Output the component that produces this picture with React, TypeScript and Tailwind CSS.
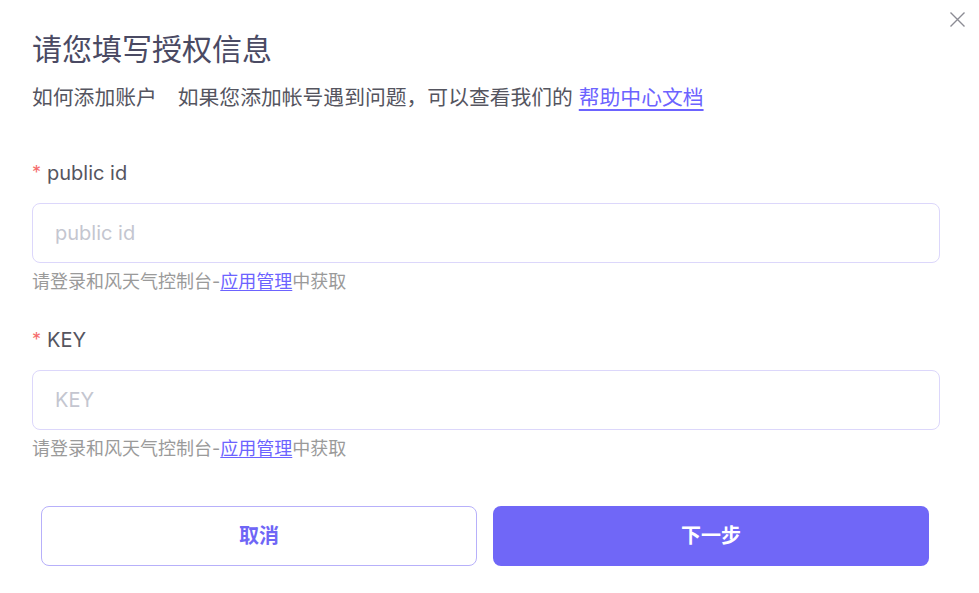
const font = { fontFamily: '"Inter", "Noto Sans CJK SC", sans-serif' };

function Field({ label, placeholder, mt }: { label: string; placeholder: string; mt: string }) {
  return (
    <div className={mt}>
      <div className="flex items-center h-[30px] text-[20px] leading-[30px] text-[#55555f]">
        <span className="text-[#f56c6c] mr-[6px] text-[18px]">*</span>
        {label}
      </div>
      <input
        placeholder={placeholder}
        className="mt-[15px] block w-full h-[60px] rounded-[8px] border border-[#dcd7fb] px-[22px] text-[20px] text-[#333] placeholder:text-[#c4c6d0] outline-none"
      />
      <p className="mt-[7px] text-[18px] leading-[24px] text-[#9a9a9a]">
        请登录和风天气控制台-
        <a href="#" className="text-[#6c63ff] underline underline-offset-2">
          应用管理
        </a>
        中获取
      </p>
    </div>
  );
}

export default function App() {
  return (
    <div className="relative w-[979px] h-[593px] bg-white" style={font}>
      {/* Close */}
      <button className="absolute left-[950px] top-[12px] text-[#8c8c94]">
        <svg width="15" height="15" viewBox="0 0 15 15" fill="none" stroke="currentColor" strokeWidth="1.4">
          <path d="M0.5 0.5L14.5 14.5M14.5 0.5L0.5 14.5" />
        </svg>
      </button>

      <div className="pl-[32px] pr-[39px] pt-[29px]">
        <h2 className="text-[30px] leading-[40px] text-[#4a4a63]">请您填写授权信息</h2>
        <p className="mt-[14px] text-[20.8px] leading-[30px] text-[#55555f]">
          如何添加账户<span className="inline-block w-[21px]" />如果您添加帐号遇到问题，可以查看我们的{" "}
          <a href="#" className="text-[#6c63ff] underline underline-offset-4">
            帮助中心文档
          </a>
        </p>

        <Field label="public id" placeholder="public id" mt="mt-[45px]" />
        <Field label="KEY" placeholder="KEY" mt="mt-[31px]" />

        <div className="mt-[45px] ml-[9px] w-[888px] grid grid-cols-2 gap-[16px]">
          <button className="h-[60px] rounded-[8px] border border-[#b7b0fa] bg-white text-[20px] font-bold text-[#6f66f6]">
            取消
          </button>
          <button className="h-[60px] rounded-[8px] bg-[#7067f7] text-[20px] font-bold text-white">
            下一步
          </button>
        </div>
      </div>
    </div>
  );
}
